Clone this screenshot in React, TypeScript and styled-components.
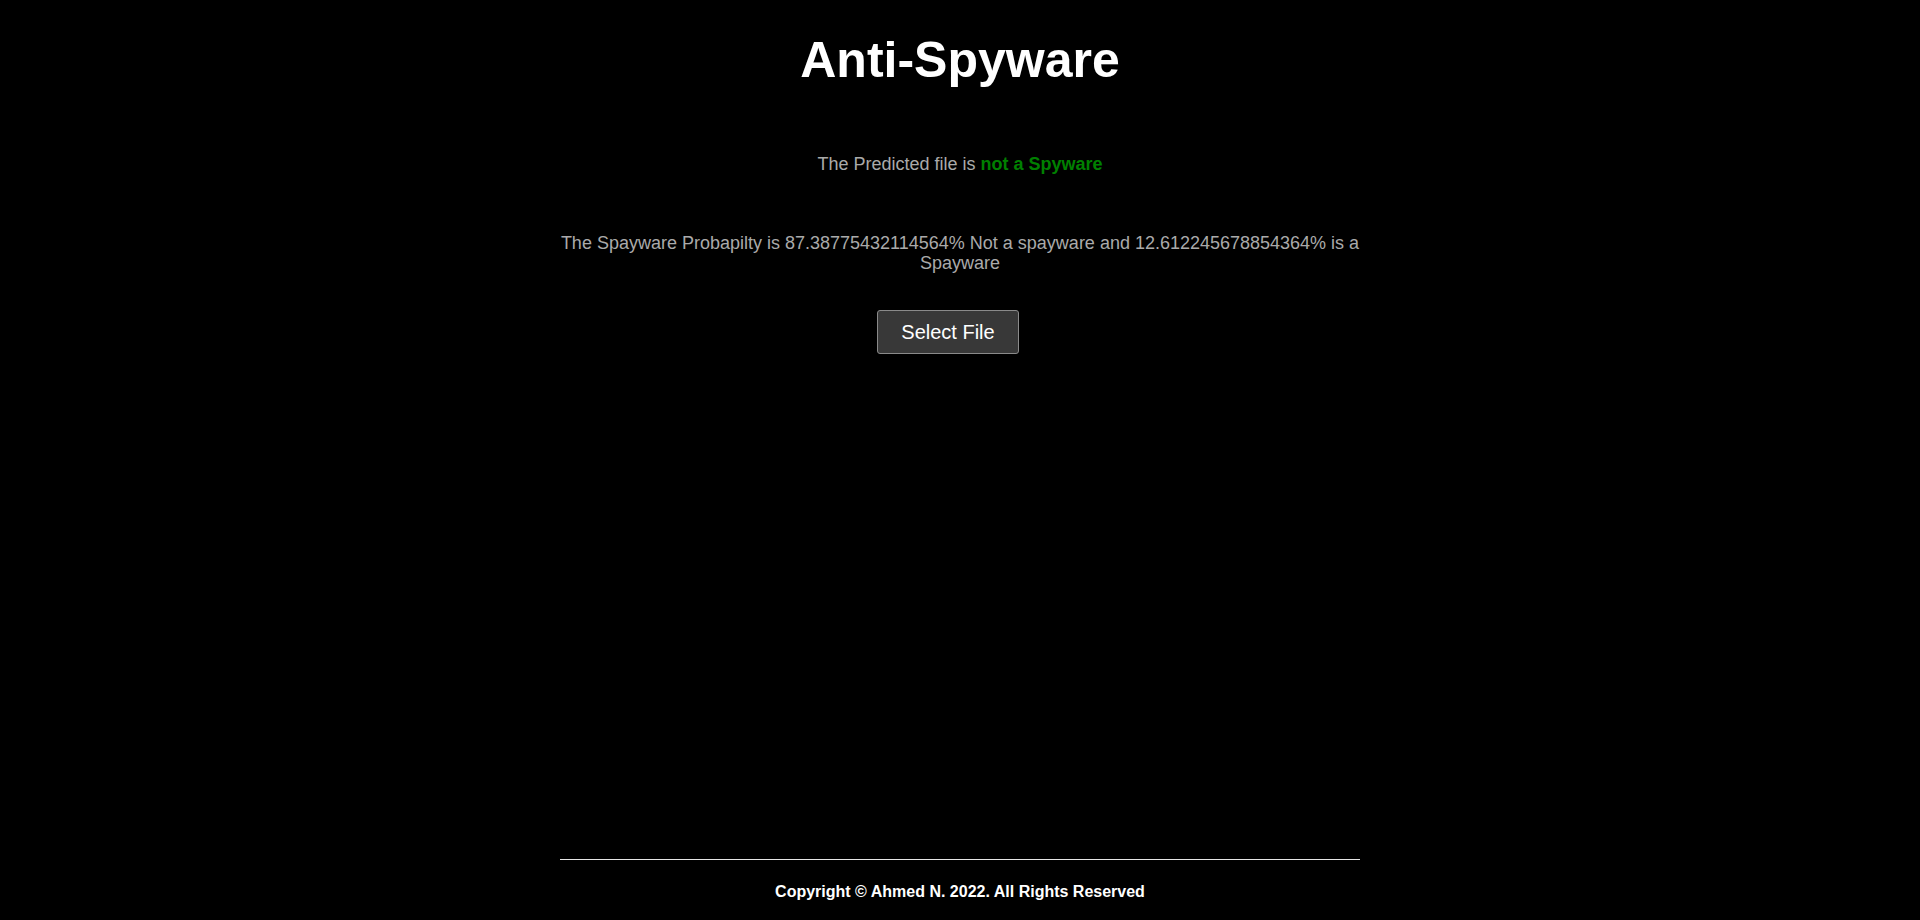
import React from "react";
import styled, { createGlobalStyle } from "styled-components";

const GlobalStyle = createGlobalStyle`
  html, body {
    margin: 0;
    padding: 0;
    background: #000;
  }
  body {
    font-family: "Liberation Sans", Arial, sans-serif;
  }
  * { box-sizing: border-box; }
`;

const Page = styled.div`
  min-height: 100vh;
  display: flex;
  flex-direction: column;
  align-items: center;
  background: #000;
`;

const Main = styled.main`
  width: 800px;
  display: flex;
  flex-direction: column;
  align-items: center;
  text-align: center;
`;

const Title = styled.h1`
  margin: 31px 0 0;
  font-size: 50px;
  font-weight: 700;
  line-height: normal;
  color: #fff;
`;

const Result = styled.p`
  margin: 65px 0 0;
  font-size: 18px;
  line-height: normal;
  color: #aaaaaa;
`;

const Verdict = styled.strong<{ $safe: boolean }>`
  font-weight: 700;
  color: ${(p) => (p.$safe ? "#008000" : "#d00000")};
`;

const Probability = styled.p`
  margin: 58px 0 0;
  font-size: 18px;
  line-height: 20.2px;
  color: #aaaaaa;
`;

const SelectButton = styled.button`
  margin: 37px 24px 0 0;
  height: 44px;
  padding: 0 23px;
  font-family: "Liberation Sans", Arial, sans-serif;
  font-size: 20px;
  color: #fff;
  background: #383838;
  border: 1px solid #8a8a8a;
  border-radius: 3px;
  cursor: pointer;
`;

const Footer = styled.footer`
  margin-top: auto;
  width: 800px;
  border-top: 1px solid #e6e6e6;
  padding: 23px 0 19px;
  text-align: center;
`;

const Copyright = styled.p`
  margin: 0;
  font-size: 16px;
  font-weight: 700;
  line-height: normal;
  color: #fff;
`;

export default function App() {
  return (
    <>
      <GlobalStyle />
      <Page>
        <Main>
          <Title>Anti-Spyware</Title>
          <Result>
            The Predicted file is <Verdict $safe>not a Spyware</Verdict>
          </Result>
          <Probability>
            The Spayware Probapilty is 87.38775432114564% Not a spayware and
            12.612245678854364% is a Spayware
          </Probability>
          <SelectButton type="button">Select File</SelectButton>
        </Main>
        <Footer>
          <Copyright>Copyright © Ahmed N. 2022. All Rights Reserved</Copyright>
        </Footer>
      </Page>
    </>
  );
}
